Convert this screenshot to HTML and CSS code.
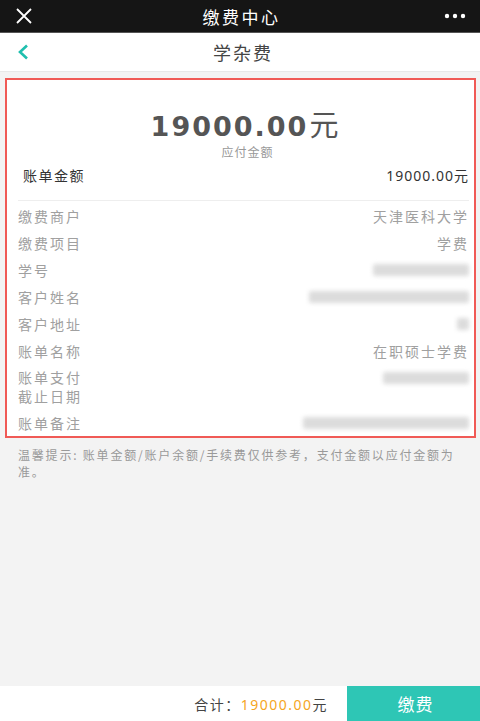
FILE: index.html
```html
<!DOCTYPE html>
<html lang="zh">
<head>
<meta charset="utf-8">
<link rel="stylesheet" href="styles.css">
</head>
<body>
<div class="page">
  <header class="topbar">
    <svg class="close" width="18" height="18" viewBox="0 0 18 18"><path d="M2 2 L16 16 M16 2 L2 16" stroke="#fff" stroke-width="1.8" fill="none"/></svg>
    <div class="topbar-title">缴费中心</div>
    <svg class="dots" width="22" height="6" viewBox="0 0 22 6"><circle cx="3" cy="3" r="2.2" fill="#fff"/><circle cx="11" cy="3" r="2.2" fill="#fff"/><circle cx="19" cy="3" r="2.2" fill="#fff"/></svg>
  </header>
  <nav class="navbar">
    <svg class="back" width="12" height="16" viewBox="0 0 12 16"><path d="M10 1.5 L3 8 L10 14.5" stroke="#1fbfae" stroke-width="2.6" fill="none"/></svg>
    <div class="nav-title">学杂费</div>
  </nav>
  <main class="content">
    <section class="card">
      <div class="amount">19000.00<span class="yuan">元</span></div>
      <div class="amount-label">应付金额</div>
      <div class="row row-main">
        <span>账单金额</span>
        <span class="num">19000.00元</span>
      </div>
      <div class="divider"></div>
      <div class="row"><span>缴费商户</span><span>天津医科大学</span></div>
      <div class="row"><span>缴费项目</span><span>学费</span></div>
      <div class="row"><span>学号</span><span class="blur" style="width:96px"></span></div>
      <div class="row"><span>客户姓名</span><span class="blur" style="width:160px"></span></div>
      <div class="row"><span>客户地址</span><span class="blur" style="width:12px"></span></div>
      <div class="row"><span>账单名称</span><span>在职硕士学费</span></div>
      <div class="row row-tall"><span class="tall-label"><span class="line">账单支付</span><span class="line">截止日期</span></span><span class="blur blur-top" style="width:86px"></span></div>
      <div class="row"><span>账单备注</span><span class="blur" style="width:166px"></span></div>
    </section>
    <p class="tip">温馨提示: 账单金额/账户余额/手续费仅供参考，支付金额以应付金额为准。</p>
  </main>
  <footer class="bottombar">
    <div class="total">合计：<span class="total-num">19000.00</span>元</div>
    <button class="pay">缴费</button>
  </footer>
</div>
</body>
</html>
```

FILE: styles.css
```css
* { box-sizing: border-box; }
html, body { margin: 0; padding: 0; }
body {
  font-family: "Noto Sans CJK SC", "Noto Sans", sans-serif;
  background: #f3f3f3;
  width: 480px;
  height: 721px;
  overflow: hidden;
}
.page {
  display: flex;
  flex-direction: column;
  height: 721px;
}
.topbar {
  height: 33px;
  background: #151515;
  display: flex;
  align-items: center;
  justify-content: space-between;
  padding: 0 14px 0 15px;
  border-bottom: 1px solid #555;
}
.topbar-title {
  color: #fff;
  font-size: 17px;
  letter-spacing: 2.5px;
  margin-left: 6px;
}
.navbar {
  height: 39px;
  background: #fff;
  display: flex;
  align-items: center;
  position: relative;
  padding-left: 17px;
  border-bottom: 1px solid #e8e8e8;
}
.nav-title {
  position: absolute;
  left: 0;
  right: 0;
  text-align: center;
  font-size: 18px;
  color: #444;
  letter-spacing: 2px;
  padding-left: 6px;
}
.content {
  flex: 1;
  padding-top: 6px;
}
.card {
  margin: 0 4px 0 5px;
  background: #fff;
  border: 2px solid #f05a56;
  padding: 25px 5px 0 11px;
  height: 360px;
}
.amount {
  text-align: center;
  font-family: "DejaVu Sans", "Noto Sans", sans-serif;
  font-weight: 700;
  font-size: 27px;
  color: #555;
  line-height: 36px;
  letter-spacing: 2px;
  padding-left: 4px;
}
.yuan {
  font-family: "Noto Sans CJK SC", sans-serif;
  font-weight: 400;
  font-size: 29px;
  margin-left: 1px;
}
.amount-label {
  text-align: center;
  font-size: 12px;
  color: #999;
  line-height: 14px;
  letter-spacing: 1px;
  padding-left: 8px;
}
.row {
  display: flex;
  justify-content: space-between;
  align-items: center;
  height: 27px;
  font-size: 14px;
  color: #a0a0a0;
  letter-spacing: 2px;
}
.row-main {
  height: 24px;
  margin-top: 4px;
  color: #333;
  padding-left: 5px;
  letter-spacing: 1.5px;
}
.num {
  font-family: "Noto Sans", "Noto Sans CJK SC", sans-serif;
  letter-spacing: 1px;
  color: #333;
}
.divider {
  height: 1px;
  background: #eee;
  margin: 13px 0 1px;
}
.row-tall {
  height: 45px;
  align-items: flex-start;
  padding-top: 4px;
}
.tall-label {
  display: flex;
  flex-direction: column;
}
.line {
  line-height: 19px;
}
.blur {
  height: 12px;
  background: #dcdcdc;
  filter: blur(2px);
  border-radius: 2px;
}
.blur-top { margin-top: 4px; }
.tip {
  margin: 8px 12px 0 18px;
  font-size: 12px;
  line-height: 17px;
  color: #999;
  letter-spacing: 1.8px;
}
.bottombar {
  height: 35px;
  background: #fff;
  display: flex;
  align-items: center;
  justify-content: flex-end;
}
.total {
  font-size: 14px;
  color: #444;
  margin-right: 19px;
  letter-spacing: 1.5px;
}
.total-num {
  color: #f5a623;
  font-family: "Noto Sans", sans-serif;
  letter-spacing: 1.5px;
}
.pay {
  width: 133px;
  height: 35px;
  border: none;
  background: #2ec6b5;
  color: #fff;
  font-family: "Noto Sans CJK SC", sans-serif;
  font-size: 17px;
  letter-spacing: 1px;
  padding-left: 10px;
}
```
